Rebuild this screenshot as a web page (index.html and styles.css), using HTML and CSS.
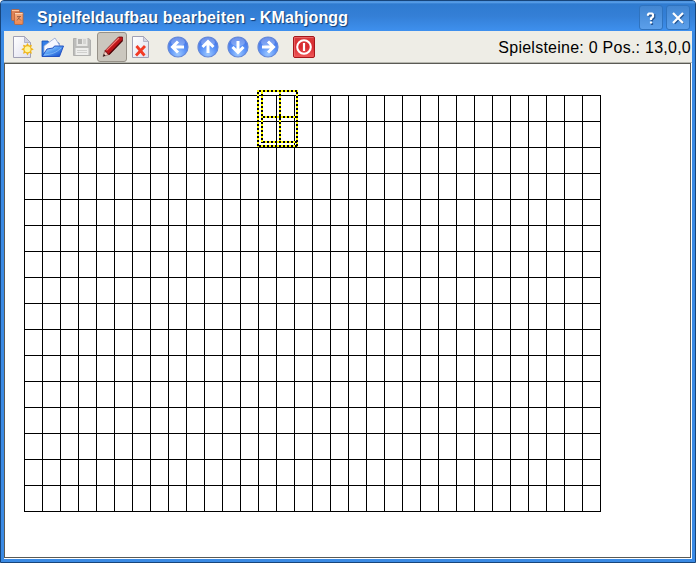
FILE: index.html
```html
<!DOCTYPE html>
<html lang="de">
<head>
<meta charset="utf-8">
<title>Spielfeldaufbau bearbeiten - KMahjongg</title>
<link rel="stylesheet" href="styles.css">
</head>
<body>
<svg class="defs" width="0" height="0" aria-hidden="true">
  <defs>
    <linearGradient id="paper" x2="1" y2="1"><stop offset="0" stop-color="#fff"/><stop offset="1" stop-color="#dedeee"/></linearGradient>
    <radialGradient id="ball" cx=".5" cy=".85" r=".8"><stop offset="0" stop-color="#9cc8ff"/><stop offset=".5" stop-color="#5c94f8"/><stop offset="1" stop-color="#3f6fe4"/></radialGradient>
    <linearGradient id="folder" x2="1" y2="1"><stop offset="0" stop-color="#d4ecff"/><stop offset=".45" stop-color="#5ba2f5"/><stop offset="1" stop-color="#0b43c8"/></linearGradient>
    <linearGradient id="red" x2="0" y2="1"><stop offset="0" stop-color="#d93c3c"/><stop offset=".5" stop-color="#d82a30"/><stop offset="1" stop-color="#f05a5a"/></linearGradient>
    <linearGradient id="tile" x2="0" y2="1"><stop offset="0" stop-color="#f7b184"/><stop offset="1" stop-color="#ed8751"/></linearGradient>
  </defs>
</svg>
<div class="window">
  <header class="titlebar">
    <svg class="app-icon" width="16" height="18" viewBox="0 0 16 18">
      <rect x="1.500" y="1.500" width="8" height="11" rx="1" fill="#df8255" stroke="#b5653f" stroke-width=".8"/>
      <path d="M2 2.500h7" stroke="#f9c5a1"/>
      <rect x="4.500" y="4.500" width="8.500" height="12" rx="1" fill="url(#tile)" stroke="#b7653b" stroke-width=".8"/>
      <path d="M5 5.500h7.500" stroke="#ffd4b4"/>
      <path d="M7 8.500h4M7 12.500l3-4M8 9.500l3 3" stroke="#8d553f" fill="none" stroke-width=".8"/>
    </svg>
    <h1 class="title">Spielfeldaufbau bearbeiten - KMahjongg</h1>
    <button class="win-btn" aria-label="Hilfe"><svg width="24" height="25" viewBox="0 0 24 25"><path class="glyph-shadow" d="M9 10.500V9.200h5.200v2.300L12 13.800v1.700m0 1.500v2" transform="translate(1 1)"/><path class="glyph" d="M9 10.800V9.500l1-1h3l1 1v2l-2 2v1.600m0 1.400v2"/></svg></button>
    <button class="win-btn" aria-label="Schließen"><svg width="24" height="25" viewBox="0 0 24 25"><path class="glyph-shadow" d="M7.500 8.500l9 9m0-9l-9 9" transform="translate(1 1)"/><path class="glyph" d="M7 8l10 10M17 8L7 18"/></svg></button>
  </header>
  <div class="client">
    <nav class="toolbar">
      <button class="tool" aria-label="Neu"><svg width="24" height="24" viewBox="0 0 24 24">
        <path d="M3.500 1.500h11l6 6v15h-17z" fill="url(#paper)" stroke="#a0a0b4"/>
        <path d="M14.500 1.500v6h6z" fill="#cfcfe0" stroke="#a2a2b7" stroke-width=".7"/>
        <path d="M17.500 8l1.500 2.600 3-.9-.9 3 2.700 1.500-2.700 1.500.9 3-3-.9-1.500 2.600-1.500-2.600-3 .9.900-3L11.200 14.200l2.700-1.500-.9-3 3 .9z" fill="#efb51d"/>
        <circle cx="17.500" cy="14.200" r="3" fill="#fff59b"/>
      </svg></button>
      <button class="tool" aria-label="Öffnen"><svg width="24" height="24" viewBox="0 0 24 24">
        <path d="M2 21V6h6l1 2h10v12z" fill="#347fe8" stroke="#124bb3" stroke-width=".8"/>
        <path d="M4 11l11-8 5 8-5 7H4z" fill="#f5f7ff" stroke="#90a4d2" stroke-width=".8"/>
        <path d="M2 21.500l5-7.500 6-1 1.500-2H23.500l-4 10.500z" fill="url(#folder)" stroke="#1748bd" stroke-width=".9"/>
        <path d="M4 20c8-1 12-2 17-7" fill="none" stroke="#a5d4ff" opacity=".55"/>
      </svg></button>
      <button class="tool" aria-label="Speichern"><svg width="24" height="24" viewBox="0 0 24 24">
        <path d="M3.500 3.500h15l2 1.500v15.500h-17z" fill="#bcbcba" stroke="#b0b0ae"/>
        <path d="M6.500 3h11v8h-11z" fill="#e8e8e6"/><path d="M8 4h4v5H8z" fill="#b4b4b2"/><path d="M13 4h3v5h-3z" fill="#d4d4d2"/>
        <path d="M5.500 13h13v7h-13z" fill="#eeeeec"/><path d="M7 15.500h10M7 17.500h10" stroke="#d0d0ce"/>
      </svg></button>
      <button class="tool pressed" aria-label="Bearbeiten"><svg width="24" height="24" viewBox="0 0 24 24">
        <path d="M2 21.500l1.800-5.500 3.700 3.700z" fill="#f6d1c6" stroke="#8b5b56" stroke-width=".7"/>
        <path d="M2 21.500l.9-2.600 1.700 1.700z" fill="#161010"/>
        <path d="M3.800 16L17.500 2H21.500v3.500L8 19.500l-1.500-.7-.5-1.600-1.500-.5z" fill="#bd1519" stroke="#720b0e" stroke-width=".8"/>
        <path d="M5.500 15.400L18 3" stroke="#f47b75" stroke-width="1.200"/>
        <path d="M8 19.500L21.500 5.500" stroke="#4e0508" stroke-width="1.200"/>
      </svg></button>
      <button class="tool last" aria-label="Löschen"><svg width="24" height="24" viewBox="0 0 24 24">
        <path d="M3.500 1.500h11l5 5v16h-16z" fill="url(#paper)" stroke="#a0a0b4"/>
        <path d="M14.500 1.500v5h5z" fill="#d5d5e3" stroke="#a2a2b7" stroke-width=".7"/>
        <path d="M7.500 11l8 9.500M16 11l-9 9.500" stroke="#f23a25" stroke-width="2.800"/>
      </svg></button>
      <span class="gap"></span>
      <button class="tool" aria-label="Links"><svg width="24" height="24" viewBox="0 0 24 24"><circle class="ball" cx="12" cy="12" r="10"/><ellipse class="shine" cx="12" cy="7" rx="7" ry="4.300"/><path class="arrow" d="M18 12H8M12 6.500L6.500 12l5.500 5.500"/></svg></button>
      <button class="tool" aria-label="Hoch"><svg width="24" height="24" viewBox="0 0 24 24"><circle class="ball" cx="12" cy="12" r="10"/><ellipse class="shine" cx="12" cy="7" rx="7" ry="4.300"/><path class="arrow" d="M12 18V8M6.500 12L12 6.500l5.500 5.500"/></svg></button>
      <button class="tool" aria-label="Runter"><svg width="24" height="24" viewBox="0 0 24 24"><circle class="ball" cx="12" cy="12" r="10"/><ellipse class="shine" cx="12" cy="7" rx="7" ry="4.300"/><path class="arrow" d="M12 6v10M6.500 12l5.500 5.500 5.500-5.500"/></svg></button>
      <button class="tool" aria-label="Rechts"><svg width="24" height="24" viewBox="0 0 24 24"><circle class="ball" cx="12" cy="12" r="10"/><ellipse class="shine" cx="12" cy="7" rx="7" ry="4.300"/><path class="arrow" d="M6 12h10M12 6.500l5.500 5.500-5.500 5.500"/></svg></button>
      <span class="gap small"></span>
      <button class="tool" aria-label="Beenden"><svg width="24" height="24" viewBox="0 0 24 24">
        <rect x="1.500" y="1.500" width="21" height="21" rx="1.500" fill="url(#red)" stroke="#a5171b"/>
        <path d="M2.500 21.500v-19h19" fill="none" stroke="#f08080" opacity=".6"/>
        <circle cx="12" cy="12" r="6.800" fill="none" stroke="#fff" stroke-width="2.100"/>
        <path d="M12 8v8" stroke="#fff" stroke-width="2.200"/>
      </svg></button>
      <p class="status">Spielsteine: 0 Pos.: 13,0,0</p>
    </nav>
    <main class="board">
      <svg class="field" width="577" height="422" viewBox="0 -5 577 422" shape-rendering="crispEdges">
        <defs><pattern id="cells" width="18" height="26" patternUnits="userSpaceOnUse"><path d="M0 0h18v1H1v25H0z"/></pattern></defs>
        <rect width="577" height="417" fill="url(#cells)"/>
        <path class="cursor-base" d="M233 -4H274M234 -5V52M273 -5V52M233 51H274M238 -3V48M256 -3V48M237 22H274M237 47H274"/>
        <path class="cursor-dots" d="M233 -4H274M234 -5V52M273 -5V52M233 51H274M238 -3V48M256 -3V48M237 22H274M237 47H274"/>
      </svg>
    </main>
  </div>
</div>
</body>
</html>
```
FILE: styles.css
```css
* { box-sizing: border-box; }
body { margin: 0; background: #fff; font-family: "Liberation Sans", Arial, sans-serif; }
.defs { display: block; height: 0; }
.window {
  width: 696px; height: 563px; padding: 0 3px 3px;
  display: flex; flex-direction: column;
  border: 1px solid #17457b; border-radius: 4px 4px 0 0;
  background: #3a8ae4; overflow: hidden;
}
.titlebar {
  height: 30px; flex: none; display: flex; align-items: center;
  margin: 0 -3px; padding: 1px 5px 0 9px;
  background: linear-gradient(#3b85d5 0, #61a5ed 1px, #2f7bd0 3px, #347fd6 50%, #3e90ee);
}
.app-icon { flex: none; margin-top: 0; }
.title {
  flex: 1; margin: 2px 0 0 11px; font-size: 16px; line-height: 20px; font-weight: 700;
  color: #fff; text-shadow: 1px 1px 1px #123d76; white-space: nowrap; letter-spacing: .14px;
}
.win-btn {
  width: 24px; height: 25px; padding: 0; margin: 1px 0 0 3px;
  border: 1px solid #2f73bf; border-radius: 3px; background: linear-gradient(#4286d2, #5b9fea);
}
.win-btn svg { display: block; margin: -1px; }
.glyph, .glyph-shadow { fill: none; stroke: #fff; stroke-width: 2.2; }
.glyph-shadow { stroke: #245592; }
.client { flex: 1; min-height: 0; display: flex; flex-direction: column; background: #fff; }
.toolbar { height: 32px; flex: none; display: flex; align-items: center; padding-left: 3px; background: #eeede6; border-bottom: 1px solid #b8b8b0; }
.tool { width: 30px; height: 30px; flex: none; padding: 2px; border: 1px solid transparent; border-radius: 3px; background: none; }
.tool svg { display: block; margin: 0; }
.tool.pressed { border-color: #969188; background: #cbc7be; }
.tool.pressed svg { margin-left: 1px; }
.tool.last svg { margin-left: -1px; }
.gap { width: 6px; }
.gap.small { width: 6px; }
.ball { fill: url(#ball); stroke: #6489d9; stroke-width: 1.2; }
.shine { fill: #fff; opacity: .25; }
.arrow { fill: none; stroke: #fff; stroke-width: 3; }
.status { margin: 2px 1px 0 auto; font-size: 16px; line-height: 20px; letter-spacing: .25px; color: #000; white-space: nowrap; }
.board { flex: 1; min-height: 0; margin-right: 1px; margin-bottom: 1px; padding: 26px 0 0 19px; border: 1px solid #5a5a55; background: #fff; }
.field { display: block; }
.cursor-base { fill: none; stroke: #ff0; stroke-width: 2; }
.cursor-dots { fill: none; stroke: #000; stroke-width: 2; stroke-dasharray: 2 2; stroke-dashoffset: 2; }
```
